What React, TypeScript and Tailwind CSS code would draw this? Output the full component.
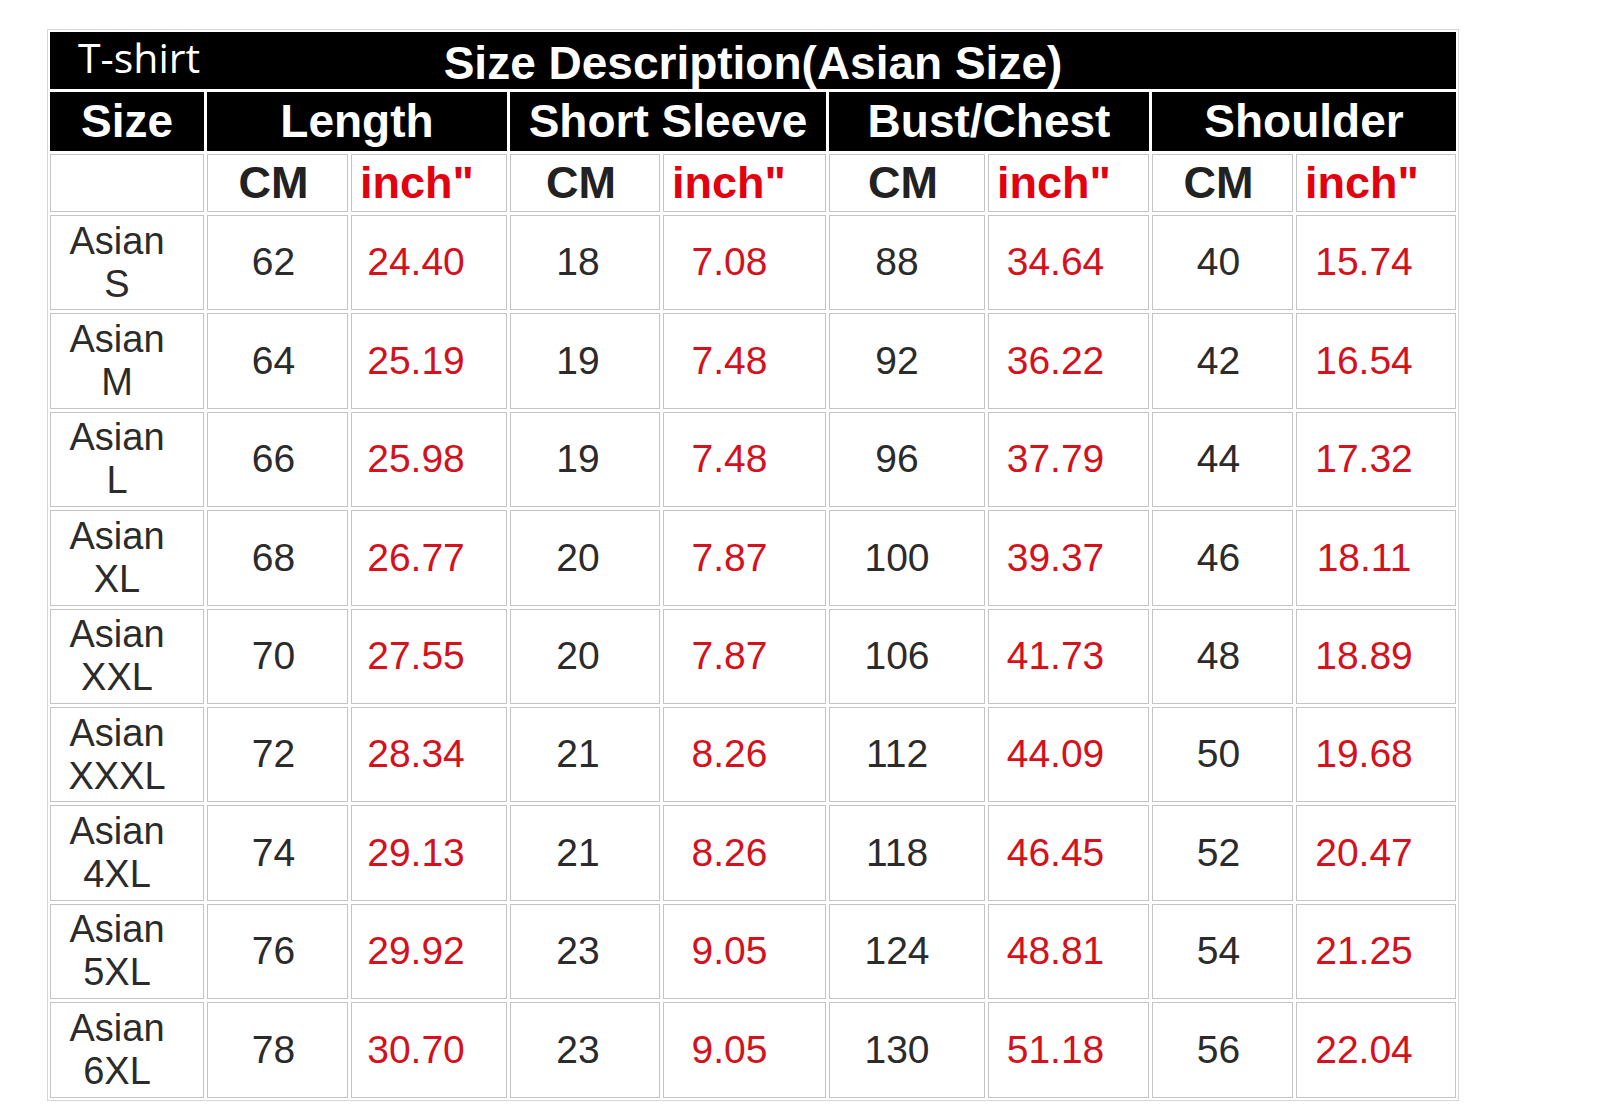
import React from "react"

type Row = { size: string; vals: string[] }

const rows: Row[] = [
  { size: "S", vals: ["62", "24.40", "18", "7.08", "88", "34.64", "40", "15.74"] },
  { size: "M", vals: ["64", "25.19", "19", "7.48", "92", "36.22", "42", "16.54"] },
  { size: "L", vals: ["66", "25.98", "19", "7.48", "96", "37.79", "44", "17.32"] },
  { size: "XL", vals: ["68", "26.77", "20", "7.87", "100", "39.37", "46", "18.11"] },
  { size: "XXL", vals: ["70", "27.55", "20", "7.87", "106", "41.73", "48", "18.89"] },
  { size: "XXXL", vals: ["72", "28.34", "21", "8.26", "112", "44.09", "50", "19.68"] },
  { size: "4XL", vals: ["74", "29.13", "21", "8.26", "118", "46.45", "52", "20.47"] },
  { size: "5XL", vals: ["76", "29.92", "23", "9.05", "124", "48.81", "54", "21.25"] },
  { size: "6XL", vals: ["78", "30.70", "23", "9.05", "130", "51.18", "56", "22.04"] },
]

const groups = ["Length", "Short Sleeve", "Bust/Chest", "Shoulder"]

// per-column right padding, the numbers sit a little left of centre
const valPad = [
  "pr-[8px]",
  "pr-[26px]",
  "pr-[14px]",
  "pr-[30px]",
  "pr-[20px]",
  "pr-[26px]",
  "pr-[8px]",
  "pr-[24px]",
]

const cell = "border border-[#c4c4c4] bg-white flex items-center justify-center"

export default function App() {
  return (
    <div className="bg-white pl-[47px] pt-[29px] font-['Liberation_Sans',Arial,sans-serif]">
      <div className="w-fit border border-[#d6d6d6] p-[2px]">
        <div className="grid grid-cols-[154px_141px_156px_150px_163px_156px_161px_141px_160px] grid-rows-[57px_59px_58px_repeat(9,95.4px)] gap-[3px]">
          {/* title row */}
          <div className="col-span-9 grid grid-cols-[1fr_auto_1fr] bg-black text-white">
            <div className="pl-[28px] pt-[1px] font-['Open_Sans',sans-serif] text-[41px] leading-[49px]">
              T-shirt
            </div>
            <div className="pt-[5px] text-[46px] font-bold leading-[53px]">
              Size Description(Asian Size)
            </div>
            <div />
          </div>

          {/* group header */}
          <div className="flex items-center justify-center bg-black text-[46px] font-bold text-white">
            Size
          </div>
          {groups.map((g) => (
            <div
              key={g}
              className="col-span-2 flex items-center justify-center bg-black text-[46px] font-bold text-white"
            >
              {g}
            </div>
          ))}

          {/* units */}
          <div className={cell} />
          {groups.map((g) => (
            <React.Fragment key={g}>
              <div className={`${cell} pr-[8px] text-[45px] font-bold text-[#222]`}>CM</div>
              <div className="flex items-center border border-[#c4c4c4] bg-white pl-[8px] text-[45px] font-bold text-[#e3000f]">
                inch"
              </div>
            </React.Fragment>
          ))}

          {/* data */}
          {rows.map((r) => (
            <React.Fragment key={r.size}>
              <div className={`${cell} flex-col pr-[20px] text-[38px] leading-[43px] text-[#2b2b2b]`}>
                <span>Asian</span>
                <span>{r.size}</span>
              </div>
              {r.vals.map((v, i) => (
                <div
                  key={i}
                  className={`${cell} ${valPad[i]} text-[39px] ${
                    i % 2 === 1 ? "text-[#d4111c]" : "text-[#2b2b2b]"
                  }`}
                >
                  {v}
                </div>
              ))}
            </React.Fragment>
          ))}
        </div>
      </div>
    </div>
  )
}
